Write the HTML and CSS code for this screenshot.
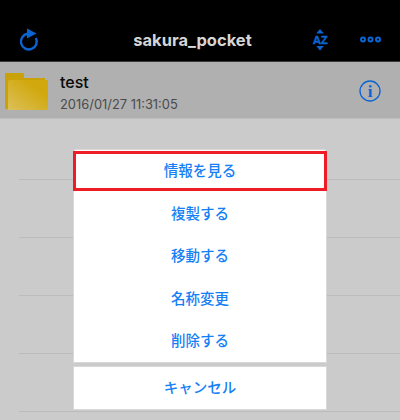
FILE: index.html
```html
<!DOCTYPE html>
<html lang="ja">
<head>
<meta charset="utf-8">
<title>sakura_pocket</title>
<link rel="stylesheet" href="styles.css">
</head>
<body>
<div class="app">
  <header class="nav">
    <svg class="ic-reload" width="26" height="26" viewBox="0 0 26 26"><path d="M19.900 11A7.900 7.900 0 1 1 11.500 6.800" fill="none" stroke="#0a64d2" stroke-width="2.400"/><path d="M11 1.500 L11 11.500 L20.500 6.500 Z" fill="#0a64d2"/></svg>
    <div class="nav-title">sakura_pocket</div>
    <svg class="ic-sort" width="20" height="22" viewBox="0 0 20 22"><path d="M10 0 L13.800 4.500 L6.200 4.500 Z M10 21.500 L13.800 17 L6.200 17 Z" fill="#0a64d2"/><text x="10" y="15.200" text-anchor="middle" class="az">AZ</text></svg>
    <svg class="ic-more" width="22" height="7" viewBox="0 0 22 7"><g fill="none" stroke="#0a64d2" stroke-width="2"><circle cx="3" cy="3.500" r="2"/><circle cx="10.500" cy="3.500" r="2"/><circle cx="18" cy="3.500" r="2"/></g></svg>
  </header>
  <section class="file-row">
    <svg class="ic-folder" width="44" height="38" viewBox="0 0 44 38">
      <defs><linearGradient id="fg" x1="0" y1="1" x2="1" y2="0"><stop offset="0" stop-color="#dcc05a"/><stop offset="0.7" stop-color="#d1a90f"/></linearGradient></defs>
      <path d="M0 1 Q0 0 1 0 L18 0 L19 1 L19 5 L40 5 L40 8 L0 34 Z" fill="#c9a108"/>
      <path d="M0 8 H3 V36 H1 Q0 36 0 35 Z" fill="#c9a108"/>
      <path d="M4 7.500 Q3 7.500 3 8.500 L3 37 L42 37 Q43 37 43 36 L43 8.500 Q43 7 42 7 L4 7 Z" fill="url(#fg)"/>
    </svg>
    <div class="file-text">
      <div class="file-name">test</div>
      <div class="file-date">2016/01/27 11:31:05</div>
    </div>
    <svg class="ic-info" width="22" height="22" viewBox="0 0 22 22"><circle cx="11" cy="11" r="10" fill="none" stroke="#0a64d2" stroke-width="1.300"/><text x="11" y="16.800" text-anchor="middle" class="info-i">i</text></svg>
  </section>
  <div class="empty-list">
    <div class="empty-row first"></div>
    <div class="empty-row"></div>
    <div class="empty-row"></div>
    <div class="empty-row"></div>
    <div class="empty-row"></div>
  </div>
  <div class="sheet">
    <div class="sheet-group">
      <div class="sheet-item selected">情報を見る</div>
      <div class="sheet-item">複製する</div>
      <div class="sheet-item">移動する</div>
      <div class="sheet-item">名称変更</div>
      <div class="sheet-item">削除する</div>
    </div>
    <div class="sheet-cancel">キャンセル</div>
  </div>
</div>
</body>
</html>
```
FILE: styles.css
```css
* { box-sizing: border-box; }
html, body { margin: 0; padding: 0; }
body { font-family: "Inter", "Liberation Sans", "Noto Sans CJK JP", sans-serif; }
.app { position: relative; width: 400px; height: 420px; overflow: hidden; background: #cbcbcb; }
.nav { position: relative; height: 62px; background: #000; border-bottom: 1px solid #3a3a3a; }
.nav-title { position: absolute; left: 0; right: 15px; top: 31px; text-align: center; line-height: 18px; color: #d6d6d6; font-size: 16.500px; font-weight: 700; }
.ic-reload { position: absolute; left: 16px; top: 27px; }
.ic-sort { position: absolute; left: 310px; top: 29px; }
.ic-more { position: absolute; left: 360px; top: 36px; }
.az { font: 700 11.500px "Liberation Sans", sans-serif; letter-spacing: -0.500px; fill: #0a64d2; stroke: #0a64d2; stroke-width: 0.400px; }
.file-row { height: 57px; background: #b0b0b0; border-bottom: 1px solid #bdbdbd; display: flex; align-items: center; padding: 0 0 0 5px; }
.ic-folder { flex: none; margin-top: 3px; }
.file-text { margin-left: 11px; flex: 1; padding-top: 4px; }
.file-name { font-size: 16px; line-height: 20px; font-weight: 500; color: #0a0a0a; }
.file-date { margin-top: 5px; font-size: 12.900px; line-height: 16px; color: #4a4a4a; }
.ic-info { flex: none; margin-right: 19px; margin-top: 2px; }
.info-i { font: 700 17px "Liberation Serif", serif; fill: #0a64d2; }
.empty-list { padding-left: 19px; }
.empty-row { height: 58px; border-bottom: 1px solid #bcbcbc; }
.empty-row.first { height: 61px; }
.sheet { position: absolute; left: 74px; top: 150px; width: 252px; display: flex; flex-direction: column; gap: 5px; font-family: "Noto Sans CJK JP", sans-serif; }
.sheet-group { background: #fff; border-radius: 3px 3px 0 0; height: 212px; box-shadow: 0 0 0 1px #d8d8d8; }
.sheet-item { height: 42.500px; padding-bottom: 3px; display: flex; align-items: center; justify-content: center; font-size: 14.500px; font-weight: 500; color: #1580f5; }
.sheet-item.selected { height: 40px; margin: 1px -1px 1.500px; border: 3px solid #ee1c25; background: #fff; position: relative; }
.sheet-cancel { height: 42px; padding-bottom: 3px; background: #fff; box-shadow: 0 0 0 1px #d8d8d8; display: flex; align-items: center; justify-content: center; font-size: 14.500px; font-weight: 500; color: #1580f5; }
```
